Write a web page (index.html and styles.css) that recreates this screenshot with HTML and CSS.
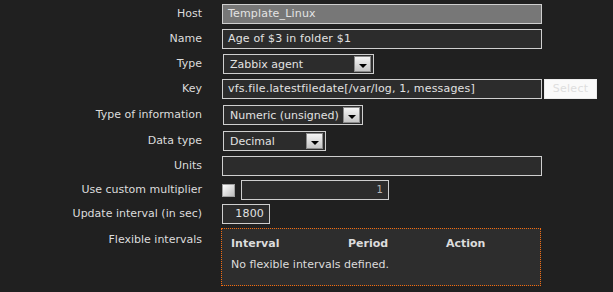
FILE: index.html
```html
<!DOCTYPE html>
<html>
<head>
<meta charset="utf-8">
<link rel="stylesheet" href="styles.css">
</head>
<body>
<div class="form">
  <div class="row r25"><div class="label">Host</div><div class="field"><div class="input ro w320">Template_Linux</div></div></div>
  <div class="row r25"><div class="label">Name</div><div class="field"><div class="input w320">Age of $3 in folder $1</div></div></div>
  <div class="row r25"><div class="label">Type</div><div class="field"><div class="select w151"><span>Zabbix agent</span><span class="dd"></span></div></div></div>
  <div class="row r26"><div class="label">Key</div><div class="field"><div class="input w320">vfs.file.latestfiledate[/var/log, 1, messages]</div><div class="btn">Select</div></div></div>
  <div class="row r26"><div class="label">Type of information</div><div class="field"><div class="select w140"><span>Numeric (unsigned)</span><span class="dd"></span></div></div></div>
  <div class="row r25"><div class="label">Data type</div><div class="field"><div class="select w103"><span>Decimal</span><span class="dd"></span></div></div></div>
  <div class="row r24"><div class="label">Units</div><div class="field"><div class="input w320"></div></div></div>
  <div class="row r24"><div class="label">Use custom multiplier</div><div class="field"><span class="check"></span><div class="input w148 right dim">1</div></div></div>
  <div class="row r24"><div class="label">Update interval (in sec)</div><div class="field"><div class="input w48 right">1800</div></div></div>
  <div class="row"><div class="label lflex">Flexible intervals</div><div class="field">
    <div class="flexbox">
      <div class="fhead"><span class="c1">Interval</span><span class="c2">Period</span><span class="c3">Action</span></div>
      <div class="fbody">No flexible intervals defined.</div>
    </div>
  </div></div>
</div>
</body>
</html>
```
FILE: styles.css
```css
html, body { margin: 0; padding: 0; }
body {
  background: #202020;
  width: 613px;
  height: 292px;
  overflow: hidden;
  font-family: "DejaVu Sans", Verdana, sans-serif;
  font-size: 11px;
  color: #dcdcdc;
}
.form { padding-top: 4px; display: flex; flex-direction: column; }
.row { display: flex; align-items: flex-start; }
.r25 { height: 25px; }
.r26 { height: 26px; }
.r24 { height: 24px; }
.label {
  width: 202px;
  text-align: right;
  height: 20px;
  line-height: 20px;
  flex: none;
}
.lflex { line-height: 24px; }
.field { margin-left: 20px; display: flex; align-items: center; }
.input {
  box-sizing: border-box;
  height: 20px;
  line-height: 18px;
  border: 1px solid #cfcfcf;
  background: #2c2c2c;
  padding: 0 5px;
  white-space: nowrap;
  overflow: hidden;
  color: #e2e2e2;
  letter-spacing: 0.17px;
}
.input.ro { background: #777777; color: #e4e4e4; }
.input.right { text-align: right; }
.input.dim { color: #b8b8b8; font-size: 10px; }
.w320 { width: 320px; }
.w148 { width: 148px; }
.w48 { width: 48px; }
.select {
  box-sizing: border-box;
  margin-left: 1px;
  height: 20px;
  border: 1px solid #cfcfcf;
  background: #2c2c2c;
  display: flex;
  align-items: center;
  justify-content: space-between;
  padding: 0 2px 0 6px;
  color: #e2e2e2;
  white-space: nowrap;
}
.w151 { width: 151px; }
.w140 { width: 140px; }
.w103 { width: 103px; }
.dd {
  box-sizing: border-box;
  flex: none;
  width: 17px;
  height: 16px;
  border: 1px solid #8a8a8a;
  background: linear-gradient(#f4f4f4, #c6c6c6);
  position: relative;
}
.dd::after {
  content: "";
  position: absolute;
  left: 4px;
  bottom: 3px;
  border-left: 4px solid transparent;
  border-right: 4px solid transparent;
  border-top: 4px solid #000;
}
.btn {
  box-sizing: border-box;
  margin-left: 2px;
  width: 53px;
  height: 20px;
  line-height: 18px;
  background: #fafafa;
  border: 1px solid #ececec;
  color: #dedede;
  text-align: center;
  letter-spacing: 0.3px;
}
.check {
  box-sizing: border-box;
  width: 13px;
  height: 13px;
  border: 1px solid #a0a0a0;
  background: linear-gradient(135deg, #ffffff, #bdbdbd);
  margin-right: 6px;
  margin-top: 1px;
}
.flexbox {
  box-sizing: border-box;
  margin-left: -1px;
  width: 320px;
  height: 58px;
  border: 1px dotted #f26b0f;
  background: #2d2d2d;
  padding: 6px 9px 0 9px;
}
.fhead { display: flex; font-weight: bold; height: 17px; line-height: 17px; }
.c1 { width: 117px; }
.c2 { width: 98px; }
.fbody { margin-top: 6px; line-height: 13px; }
```
